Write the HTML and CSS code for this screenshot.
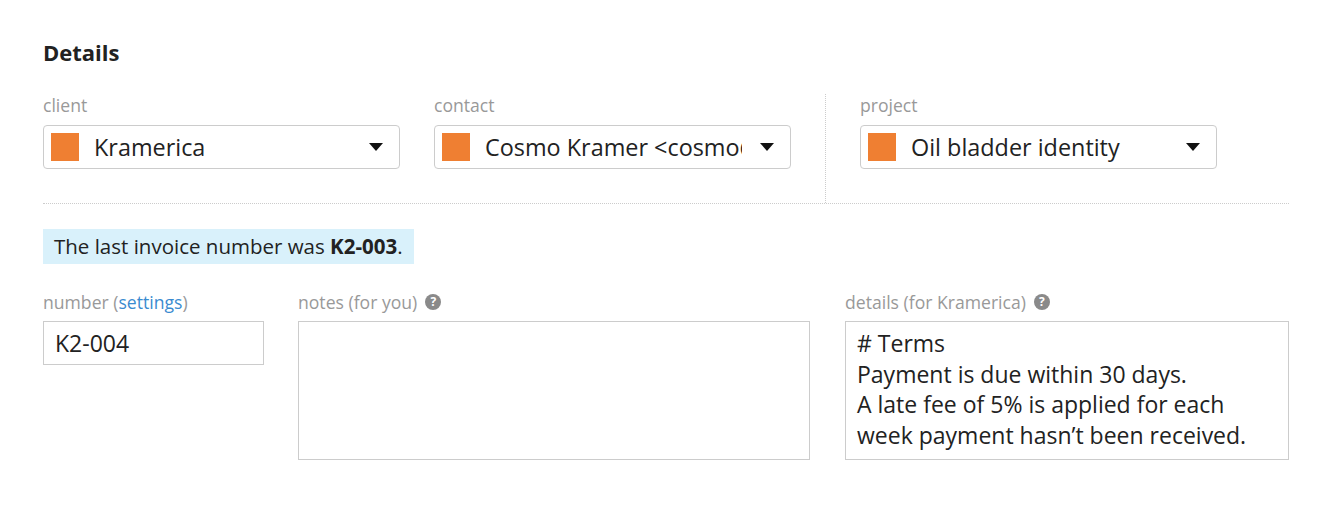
FILE: index.html
```html
<!DOCTYPE html>
<html>
<head>
<meta charset="utf-8">
<link rel="stylesheet" href="styles.css">
</head>
<body>
<div class="page">
  <h2 class="title">Details</h2>
  <div class="top-row">
    <div class="top-left">
      <div class="field sel-field">
        <div class="label">client</div>
        <div class="select"><span class="swatch"></span><span class="sel-text">Kramerica</span><span class="caret"></span></div>
      </div>
      <div class="field sel-field">
        <div class="label">contact</div>
        <div class="select"><span class="swatch"></span><span class="sel-text">Cosmo Kramer &lt;cosmo@kramerica.com&gt;</span><span class="caret"></span></div>
      </div>
    </div>
    <div class="top-right">
      <div class="field sel-field">
        <div class="label">project</div>
        <div class="select"><span class="swatch"></span><span class="sel-text">Oil bladder identity</span><span class="caret"></span></div>
      </div>
    </div>
  </div>
  <div class="notice">The last invoice number was <b>K2-003</b>.</div>
  <div class="bottom-row">
    <div class="field num-field">
      <div class="label">number (<a class="link" href="#">settings</a>)</div>
      <div class="input">K2-004</div>
    </div>
    <div class="field notes-field">
      <div class="label">notes (for you) <span class="help">?</span></div>
      <div class="textarea"></div>
    </div>
    <div class="field details-field">
      <div class="label">details (for Kramerica) <span class="help">?</span></div>
      <div class="textarea">
        <div># Terms</div>
        <div>Payment is due within 30 days.</div>
        <div>A late fee of 5% is applied for each</div>
        <div>week payment hasn’t been received.</div>
      </div>
    </div>
  </div>
</div>
</body>
</html>
```
FILE: styles.css
```css
* { box-sizing: border-box; }
body {
  margin: 0;
  background: #fff;
  font-family: "Open Sans", "Noto Sans", sans-serif;
  color: #222;
}
.page {
  padding: 38px 0 0 43px;
  width: 1289px;
}
.title {
  margin: 0;
  font-size: 22px;
  font-weight: 700;
  line-height: 28px;
  color: #222;
}
.top-row {
  display: flex;
  margin-top: 28px;
  border-bottom: 1px dotted #ccc;
}
.top-left {
  display: flex;
  gap: 34px;
  width: 783px;
  border-right: 1px dotted #ccc;
  padding-bottom: 34px;
}
.top-right {
  padding-left: 34px;
  padding-bottom: 34px;
}
.sel-field { width: 357px; }
.label {
  font-size: 17.6px;
  line-height: 22px;
  color: #999;
  height: 22px;
  margin-bottom: 9px;
  display: flex;
  align-items: center;
  white-space: nowrap;
}
.link { color: #3a8bd0; text-decoration: none; }
.select {
  height: 44px;
  border: 1px solid #ccc;
  border-radius: 4px;
  display: flex;
  align-items: center;
  padding: 0 16px 0 7px;
  background: #fff;
}
.swatch {
  width: 28px;
  height: 28px;
  background: #ef7f32;
  flex: none;
}
.sel-text {
  flex: 1;
  min-width: 0;
  margin-left: 15px;
  margin-right: 18px;
  font-size: 23.4px;
  white-space: nowrap;
  overflow: hidden;
  color: #222;
}
.caret {
  width: 0;
  height: 0;
  border-left: 7px solid transparent;
  border-right: 7px solid transparent;
  border-top: 8px solid #111;
  flex: none;
}
.notice {
  display: inline-block;
  margin-top: 25px;
  background: #d9f1fb;
  padding: 4px 11px;
  font-size: 20.5px;
  line-height: 27px;
  color: #222;
}
.notice b { font-weight: 700; }
.bottom-row {
  display: flex;
  gap: 34px;
  margin-top: 27px;
}
.bottom-row .label { margin-bottom: 8px; }
.num-field { width: 221px; }
.notes-field { width: 512px; }
.details-field { width: 444px; margin-left: 1px; }
.help {
  display: inline-flex;
  align-items: center;
  justify-content: center;
  width: 16px;
  height: 16px;
  border-radius: 50%;
  background: #8a8a8a;
  color: #fff;
  font-size: 12px;
  font-weight: 700;
  margin-left: 8px;
  line-height: 1;
}
.input {
  height: 44px;
  border: 1px solid #ccc;
  padding: 0 11px;
  font-size: 23px;
  line-height: 42px;
  color: #222;
}
.textarea {
  height: 139px;
  border: 1px solid #ccc;
  padding: 6px 11px;
  font-size: 23px;
  line-height: 30.5px;
  color: #222;
}
```
